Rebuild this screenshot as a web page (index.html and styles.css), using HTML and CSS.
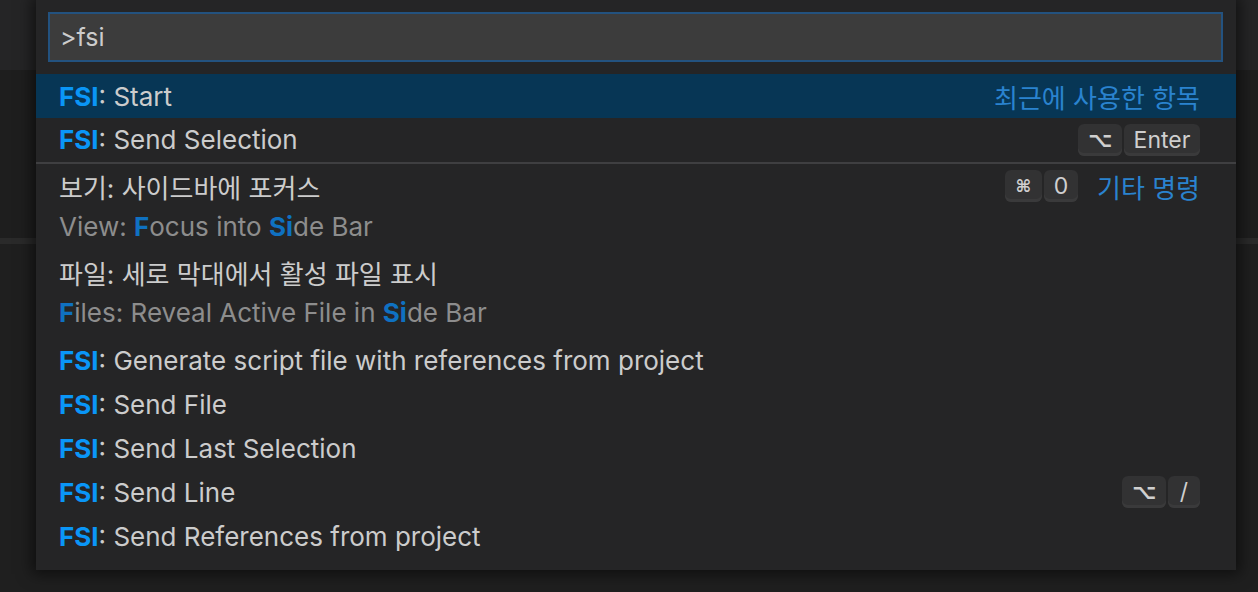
FILE: index.html
```html
<!DOCTYPE html>
<html lang="ko">
<head>
<meta charset="utf-8">
<link rel="stylesheet" href="styles.css">
</head>
<body>
<div class="backdrop">
  <div class="bg-top"></div>
  <div class="bg-mid"></div>
  <div class="bg-line"></div>
  <div class="bg-rest"></div>
</div>
<div class="quick-open">
  <div class="input-wrap">
    <div class="input">&gt;fsi</div>
  </div>
  <div class="list">
    <div class="row selected">
      <div class="label"><span class="hl">FSI</span>: Start</div>
      <div class="right"><span class="group">최근에 사용한 항목</span></div>
    </div>
    <div class="row sep">
      <div class="label"><span class="hl">FSI</span>: Send Selection</div>
      <div class="right"><span class="keys"><span class="key k-opt">⌥</span><span class="key k-enter">Enter</span></span></div>
    </div>
    <div class="row two">
      <div class="line1">
        <div class="label ko">보기: 사이드바에 포커스</div>
        <div class="right"><span class="keys"><span class="key k-cmd">⌘</span><span class="key k-zero">0</span></span><span class="group gap">기타 명령</span></div>
      </div>
      <div class="detail">View: <span class="hl2">F</span>ocus into <span class="hl2">Si</span>de Bar</div>
    </div>
    <div class="row two last-two">
      <div class="line1">
        <div class="label ko">파일: 세로 막대에서 활성 파일 표시</div>
      </div>
      <div class="detail"><span class="hl2">F</span>iles: Reveal Active File in <span class="hl2">Si</span>de Bar</div>
    </div>
    <div class="row">
      <div class="label"><span class="hl">FSI</span>: Generate script file with references from project</div>
    </div>
    <div class="row">
      <div class="label"><span class="hl">FSI</span>: Send File</div>
    </div>
    <div class="row">
      <div class="label"><span class="hl">FSI</span>: Send Last Selection</div>
    </div>
    <div class="row">
      <div class="label"><span class="hl">FSI</span>: Send Line</div>
      <div class="right"><span class="keys"><span class="key k-opt">⌥</span><span class="key k-slash">/</span></span></div>
    </div>
    <div class="row">
      <div class="label"><span class="hl">FSI</span>: Send References from project</div>
    </div>
  </div>
</div>
</body>
</html>
```

FILE: styles.css
```css
* { box-sizing: border-box; }
html, body {
  margin: 0;
  padding: 0;
  width: 1258px;
  height: 592px;
  overflow: hidden;
  background: #1e1e1e;
  font-family: "Inter", "Noto Sans CJK KR", sans-serif;
  color: #cccccc;
}
.backdrop {
  display: flex;
  flex-direction: column;
  height: 592px;
}
.bg-top { height: 70px; background: #252526; }
.bg-mid { height: 168px; background: #1e1e1e; }
.bg-line { height: 6px; background: #2a2a2a; }
.bg-rest { flex: 1; background: #1f1f1f; }

.quick-open {
  position: absolute;
  left: 36px;
  top: 0;
  width: 1200px;
  height: 570px;
  background: #252526;
  box-shadow: 0 0 14px 4px rgba(0, 0, 0, 0.55);
}
.input-wrap {
  padding: 12px 13px 0 12px;
}
.input {
  height: 50px;
  background: #3c3c3c;
  border: 2px solid #23527f;
  padding-left: 10px;
  font-size: 25px;
  line-height: 46px;
  color: #cccccc;
}
.list {
  margin-top: 12px;
}
.row {
  height: 44px;
  padding: 0 36px 0 23px;
  display: flex;
  align-items: center;
  justify-content: space-between;
  font-size: 26px;
  white-space: nowrap;
}
.row.selected { background: #073655; }
.row.sep { border-bottom: 2px solid #3f3f41; height: 46px; padding-bottom: 1px; }
.row.two {
  height: 86px;
  flex-direction: column;
  align-items: stretch;
  justify-content: flex-start;
}
.row.last-two { height: 88px; }
.line1 {
  height: 44px;
  display: flex;
  align-items: center;
  justify-content: space-between;
}
.detail {
  height: 38px;
  line-height: 38px;
  color: #8d8d8d;
}
.ko { font-size: 26px; letter-spacing: 0; }
.hl { color: #0a96f7; font-weight: 700; }
.hl2 { color: #0f71c1; font-weight: 700; }
.right {
  display: flex;
  align-items: center;
}
.group {
  color: #2a83cf;
  font-size: 26px;
}
.group.gap { margin-left: 19px; }
.keys {
  display: flex;
  gap: 2px;
}
.key {
  height: 32px;
  display: flex;
  align-items: center;
  justify-content: center;
  background: #323233;
  border-radius: 6px;
  box-shadow: inset 0 -3px 0 #3a3a3b;
  font-size: 23px;
  color: #cfcfcf;
  font-family: "Inter", "DejaVu Sans", sans-serif;
}
.k-opt { width: 44px; font-family: "DejaVu Sans", sans-serif; font-size: 21px; font-weight: 700; }
.k-enter { width: 76px; }
.k-cmd { width: 37px; font-family: "DejaVu Sans", sans-serif; font-size: 17px; font-weight: 700; }
.k-zero { width: 34px; }
.k-slash { width: 32px; }
```
